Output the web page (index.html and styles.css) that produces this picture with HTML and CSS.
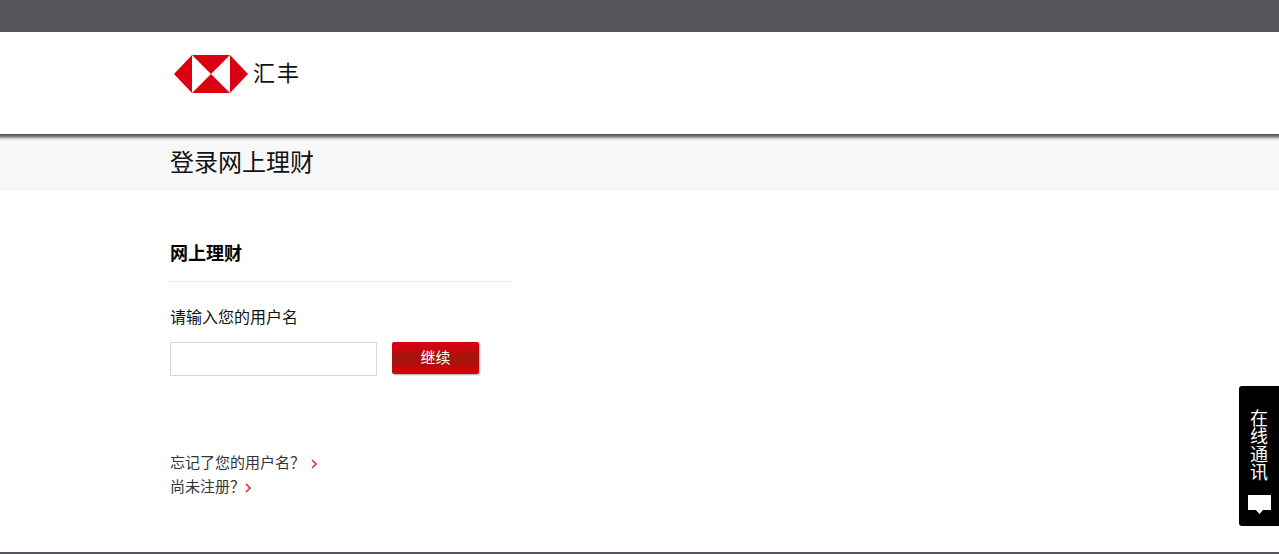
FILE: index.html
```html
<!DOCTYPE html>
<html lang="zh-CN">
<head>
    <meta charset="UTF-8">
    <meta name="viewport" content="width=device-width, initial-scale=1.0">
    <title>登录网上理财</title>
    <link rel="stylesheet" href="styles.css">
</head>
<body>
    <div class="top-bar"></div>
    <header class="brand">
        <div class="logo">
            <svg class="logo-mark" viewBox="0 0 74 38" width="74" height="38">
                <path fill="#ffffff" d="M18 0h38v38H18z"/>
                <path fill="#db0011" d="M18 0h38L37 19zM18 38h38L37 19zM18 0v38L0 19zM56 0v38l18-19z"/>
            </svg>
            <span class="logo-text">汇丰</span>
        </div>
    </header>
    <div class="title-band">
        <h1>登录网上理财</h1>
    </div>
    <main class="content">
        <section class="login">
            <h2>网上理财</h2>
            <label for="username">请输入您的用户名</label>
            <div class="login-row">
                <input type="text" id="username">
                <button type="button">继续</button>
            </div>
            <ul class="links">
                <li><a href="#">忘记了您的用户名？<svg class="chevron chevron-far" viewBox="0 0 6 10" width="6" height="10"><path d="M1 1l4 4-4 4"/></svg></a></li>
                <li><a href="#">尚未注册？<svg class="chevron" viewBox="0 0 6 10" width="6" height="10"><path d="M1 1l4 4-4 4"/></svg></a></li>
            </ul>
        </section>
    </main>
    <footer class="page-end"></footer>
    <a class="chat" href="#">
        <span class="chat-text">在线通讯</span>
        <svg viewBox="0 0 23 20" width="23" height="20"><path fill="#ffffff" d="M0 0h23v15h-8l-3.500 4-3.500-4H0z"/></svg>
    </a>
</body>
</html>
```

FILE: styles.css
```css
html, body {
    height: 100%;
}
body {
    margin: 0;
    display: flex;
    flex-direction: column;
    overflow: hidden;
    background: #ffffff;
    color: #111111;
    font-family: "Liberation Sans", "Noto Sans CJK SC", sans-serif;
}
.top-bar {
    height: 32px;
    background: #54565b;
}
.brand {
    height: 102px;
    padding: 23px 0 0 174px;
    box-sizing: border-box;
}
.logo {
    display: flex;
    align-items: center;
    gap: 5px;
}
.logo-text {
    font-size: 22px;
    letter-spacing: 2px;
    line-height: 38px;
    color: #111111;
}
.title-band {
    height: 57px;
    padding-left: 170px;
    box-sizing: border-box;
    background: linear-gradient(#4a4a4a 0, #8f8f8f 3px, #e4e4e4 5px, #f8f8f8 7px);
}
.title-band h1 {
    margin: 0;
    padding-top: 12px;
    font-size: 24px;
    font-weight: 400;
    line-height: 33px;
}
.content {
    flex: 1;
    padding: 50px 0 0 170px;
}
.login {
    width: 342px;
}
.login h2 {
    margin: 0 0 26px;
    padding-top: 1px;
    padding-bottom: 15px;
    border-bottom: 1px dotted #dddddd;
    font-size: 18px;
    line-height: 24px;
    color: #000000;
}
.login label {
    display: block;
    font-size: 16px;
    line-height: 20px;
}
.login-row {
    display: flex;
    gap: 15px;
    margin-top: 14px;
}
.login-row input {
    width: 207px;
    height: 34px;
    padding: 0 8px;
    border: 1px solid #d7d7d7;
    box-sizing: border-box;
}
.login-row button {
    width: 87px;
    height: 32px;
    padding: 0 0 4px;
    border: 0;
    border-radius: 2px;
    background: linear-gradient(#d3000f 0, #d3000f 15%, #a5150a 45%, #a5150a 60%, #d3000f 90%);
    box-shadow: 1px 1px 2px rgba(0, 0, 0, 0.35);
    color: #ffffff;
    font-family: inherit;
    font-size: 15px;
}
.links {
    list-style: none;
    margin: 75px 0 0;
    padding: 0;
    font-size: 15px;
    line-height: 24px;
}
.links a {
    color: #333333;
    text-decoration: none;
}
.chevron {
    margin-left: 0;
    vertical-align: -1px;
}
.chevron-far {
    margin-left: 6px;
}
.chevron path {
    fill: none;
    stroke: #d9363a;
    stroke-width: 1.600;
}
.page-end {
    height: 2px;
    background: #54565b;
}
.chat {
    position: fixed;
    right: 0;
    top: 386px;
    width: 40px;
    height: 140px;
    padding-top: 24px;
    box-sizing: border-box;
    display: flex;
    flex-direction: column;
    align-items: center;
    background: #000000;
    border-radius: 3px 0 0 3px;
    color: #ffffff;
    text-decoration: none;
}
.chat-text {
    width: 18px;
    font-size: 18px;
    line-height: 18px;
    text-align: center;
}
.chat svg {
    margin-top: 13px;
}
```
